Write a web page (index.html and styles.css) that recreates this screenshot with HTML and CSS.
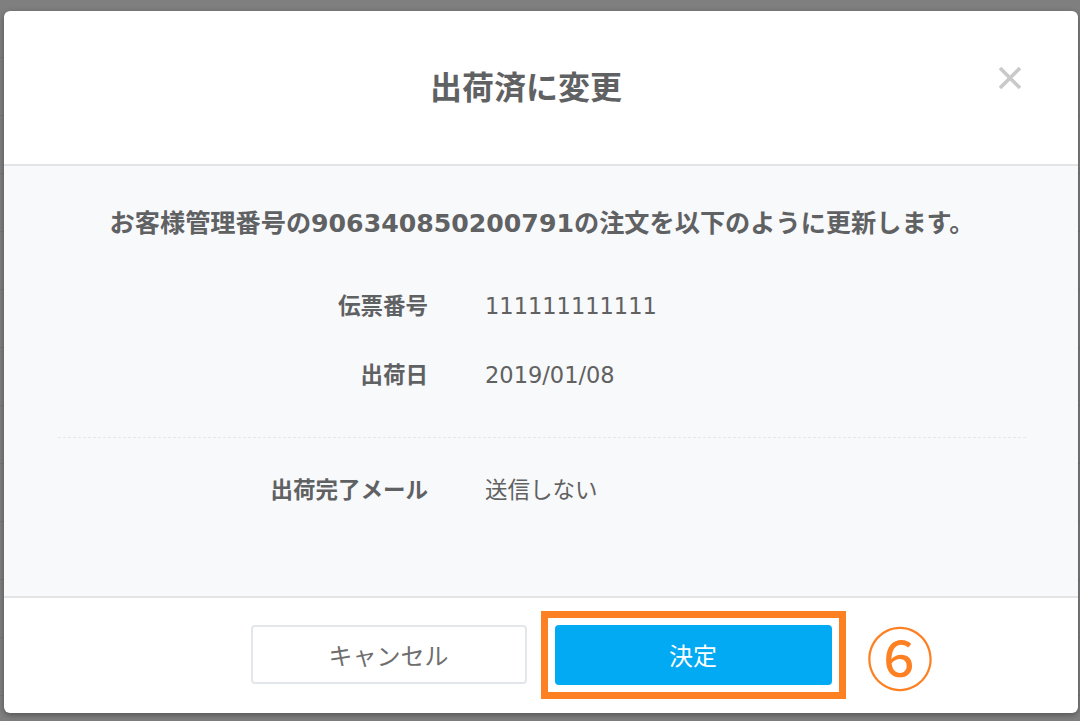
FILE: index.html
```html
<!DOCTYPE html>
<html lang="ja">
<head>
<meta charset="utf-8">
<link rel="stylesheet" href="styles.css">
</head>
<body>
<div class="backdrop">
  <div class="bg-lines">
    <div class="bg-row"></div><div class="bg-row"></div><div class="bg-row"></div><div class="bg-row"></div>
    <div class="bg-row"></div><div class="bg-row"></div><div class="bg-row"></div><div class="bg-row"></div>
    <div class="bg-row"></div><div class="bg-row"></div><div class="bg-row"></div><div class="bg-row"></div>
  </div>
  <div class="modal">
    <div class="modal-header">
      <h1 class="modal-title">出荷済に変更</h1>
      <button class="close-btn" aria-label="閉じる">
        <svg width="24" height="24" viewBox="0 0 24 24"><path d="M2 2 L22 22 M22 2 L2 22" stroke="#c9c9c9" stroke-width="3.6" fill="none"/></svg>
      </button>
    </div>
    <div class="modal-body">
      <p class="message">お客様管理番号の906340850200791の注文を以下のように更新します。</p>
      <div class="fields">
        <div class="label">伝票番号</div><div class="value">111111111111</div>
        <div class="label">出荷日</div><div class="value">2019/01/08</div>
      </div>
      <hr class="divider">
      <div class="fields">
        <div class="label">出荷完了メール</div><div class="value">送信しない</div>
      </div>
    </div>
    <div class="modal-footer">
      <button class="btn btn-cancel">キャンセル</button>
      <div class="highlight">
        <button class="btn btn-primary">決定</button>
      </div>
      <span class="step-mark">⑥</span>
    </div>
  </div>
</div>
</body>
</html>
```

FILE: styles.css
```css
* { box-sizing: border-box; }
html, body {
  margin: 0;
  padding: 0;
  width: 1080px;
  height: 721px;
  overflow: hidden;
  font-family: "DejaVu Sans", "Noto Sans CJK JP", sans-serif;
  color: #616161;
}
.backdrop {
  position: relative;
  width: 1080px;
  height: 721px;
  background: #7f7f7f;
  padding: 11px 2px 0 4px;
}
.bg-lines {
  position: absolute;
  inset: 0;
  display: flex;
  flex-direction: column;
}
.bg-row {
  height: 58px;
  border-bottom: 1px solid #777;
}
.modal {
  position: relative;
  width: 1074px;
  height: 702px;
  background: #fff;
  border-radius: 6px;
  box-shadow: 0 2px 6px rgba(0,0,0,0.35);
  display: flex;
  flex-direction: column;
  overflow: hidden;
}
.modal-header {
  position: relative;
  height: 155px;
  border-bottom: 2px solid #e3e4e6;
  display: flex;
  align-items: center;
  justify-content: center;
  padding-top: 1px;
  padding-right: 30px;
}
.modal-title {
  margin: 0;
  font-size: 32px;
  font-weight: bold;
  line-height: 40px;
  color: #5f6163;
}
.close-btn {
  position: absolute;
  right: 56px;
  top: 55px;
  width: 24px;
  height: 24px;
  padding: 0;
  border: 0;
  background: none;
}
.close-btn svg { display: block; }
.modal-body {
  background: #f8f9fb;
  height: 432px;
  border-bottom: 2px solid #e3e4e6;
  padding: 40px 52px 0 54px;
}
.message {
  margin: 0;
  text-align: center;
  font-size: 25.2px;
  line-height: 36px;
  font-weight: bold;
  color: #5f6163;
}
.fields {
  display: grid;
  grid-template-columns: 370px 1fr;
  column-gap: 57px;
  row-gap: 33px;
  margin-top: 46px;
}
.label {
  text-align: right;
  font-weight: bold;
  font-size: 22.5px;
  line-height: 36px;
  color: #5f6163;
}
.value {
  font-size: 22.5px;
  line-height: 36px;
  color: #616161;
}
.divider {
  margin: 44px 0 0 0;
  border: 0;
  border-top: 1px dashed #e6e7e9;
  height: 0;
}
.divider + .fields { margin-top: 34px; }
.modal-footer {
  position: relative;
  flex: 1;
  display: flex;
  align-items: center;
  justify-content: center;
  gap: 14px;
  padding-bottom: 2px;
  padding-left: 14px;
}
.btn {
  font-family: "DejaVu Sans", "Noto Sans CJK JP", sans-serif;
  font-size: 24px;
  height: 59px;
  border-radius: 4px;
  padding: 0;
}
.btn-cancel {
  width: 276px;
  background: #fff;
  border: 2px solid #e3e6ea;
  color: #6e6e6e;
}
.highlight {
  border: 7px solid #fd8023;
  padding: 7px;
  background: #fff;
}
.btn-primary {
  display: block;
  width: 277px;
  height: 60px;
  background: #02a9f3;
  border: 0;
  color: #fff;
}
.step-mark {
  position: absolute;
  left: 862px;
  top: 18px;
  font-family: "Noto Sans CJK JP", sans-serif;
  font-size: 68px;
  line-height: 80px;
  color: #fd8023;
}
```
